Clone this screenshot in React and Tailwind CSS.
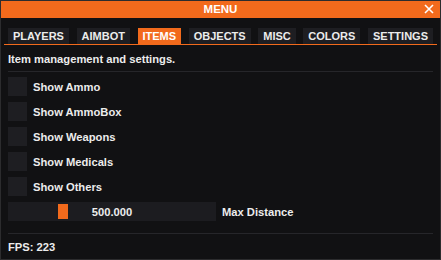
import React from "react";

const tabs = ["PLAYERS", "AIMBOT", "ITEMS", "OBJECTS", "MISC", "COLORS", "SETTINGS"];
const options = ["Show Ammo", "Show AmmoBox", "Show Weapons", "Show Medicals", "Show Others"];

export default function App() {
  return (
    <div
      className="w-[441px] h-[260px] bg-[#111113] border border-[#2c2c2e] flex flex-col text-[#ececec] overflow-hidden"
      style={{ fontFamily: '"Liberation Sans", Arial, sans-serif' }}
    >
      {/* TITLE */}
      <div className="relative h-[17px] bg-[#f26a1c] flex items-center justify-center text-[11.5px] font-bold text-white">
        MENU
        <span className="absolute right-[5px] top-[2px]">
          <svg width="12" height="12" viewBox="0 0 12 12">
            <path d="M2 2 L10 10 M10 2 L2 10" stroke="white" strokeWidth="1.6" />
          </svg>
        </span>
      </div>

      {/* TABS */}
      <div className="mx-[3px] mt-[10px] px-[4px] flex justify-between border-b border-[#f26a1c]">
        {tabs.map(t => (
          <div
            key={t}
            className={`h-[16px] px-[5px] flex items-center text-[11px] font-bold leading-none ${
              t === "ITEMS" ? "bg-[#f26a1c] text-white" : "bg-[#1e1e22]"
            }`}
          >
            {t}
          </div>
        ))}
      </div>

      {/* CONTENT */}
      <div className="px-[7px] flex flex-col">
        <div className="h-[26px] flex items-center text-[11.2px] font-bold pt-[3px]">
          Item management and settings.
        </div>
        <div className="h-px bg-[#26262a]" />

        <div className="flex flex-col gap-[6px] mt-[5px]">
          {options.map(o => (
            <div key={o} className="flex items-center gap-[6px]">
              <div className="w-[19px] h-[19px] bg-[#1e1e22]" />
              <span className="text-[11.2px] font-bold pt-[1px]">{o}</span>
            </div>
          ))}

          <div className="flex items-center gap-[6px]">
            <div className="relative w-[208px] h-[19px] bg-[#1c1c20] flex items-center justify-center text-[11.2px] font-bold">
              <div className="absolute left-[50px] top-[2px] w-[10px] h-[15px] bg-[#f26a1c]" />
              <span className="relative pt-[1px]">500.000</span>
            </div>
            <span className="text-[11.2px] font-bold pt-[1px]">Max Distance</span>
          </div>
        </div>

        <div className="h-px bg-[#26262a] mt-[12px]" />
        <div className="h-[26px] flex items-center text-[11.2px] font-bold pt-[1px]">
          FPS: 223
        </div>
      </div>
    </div>
  );
}
